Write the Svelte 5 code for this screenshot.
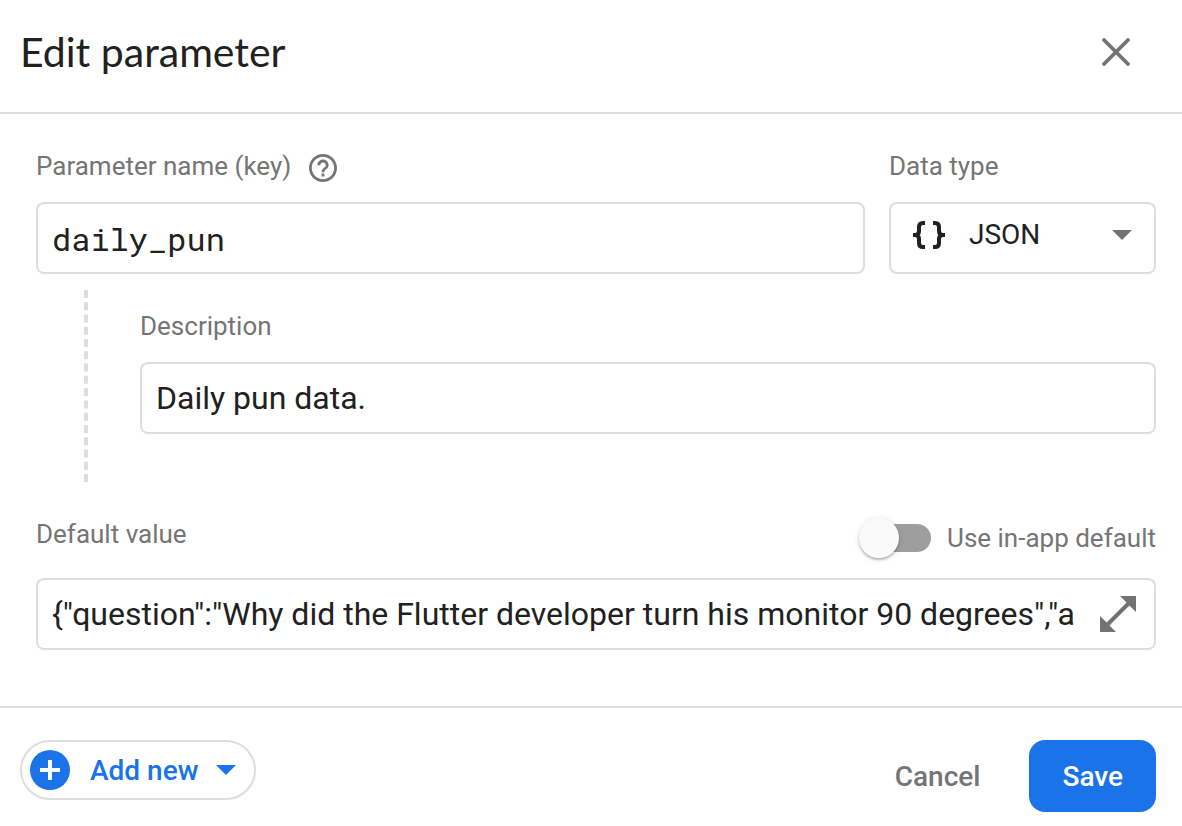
<script>
  let name = $state('daily_pun');
  let type = $state('JSON');
  let description = $state('Daily pun data.');
  let value = $state('{"question":"Why did the Flutter developer turn his monitor 90 degrees","a');
  let useDefault = $state(false);
</script>

<form class="dialog" onsubmit={(e) => e.preventDefault()}>
  <header>
    <h1>Edit parameter</h1>
    <button type="button" class="icon-button" aria-label="Close">
      <svg width="32" height="32" viewBox="0 0 32 32"><path d="M4 4 28 28M28 4 4 28" fill="none" stroke="#727272" stroke-width="3.8" stroke-linecap="round" /></svg>
    </button>
  </header>

  <main>
    <div class="top">
      <div class="field">
        <div class="label-row">
          <label for="name">Parameter name (key)</label>
          <button type="button" class="help" aria-label="Help">
            <svg width="28" height="28" viewBox="2 2 20 20"><path fill="#757575" d="M11 18h2v-2h-2v2zm1-16C6.480 2 2 6.480 2 12s4.480 10 10 10 10-4.480 10-10S17.520 2 12 2zm0 18c-4.410 0-8-3.590-8-8s3.590-8 8-8 8 3.590 8 8-3.590 8-8 8zm0-14c-2.210 0-4 1.790-4 4h2c0-1.100.9-2 2-2s2 .9 2 2c0 2-3 1.750-3 5h2c0-2.250 3-2.500 3-5 0-2.210-1.790-4-4-4z" /></svg>
          </button>
        </div>
        <div class="box"><input id="name" class="mono" bind:value={name} spellcheck="false" /></div>
      </div>
      <div class="field type">
        <div class="label-row"><label for="type">Data type</label></div>
        <div class="box select-box">
          <svg width="34" height="30" viewBox="0 0 34 30" fill="none" stroke="#212121" stroke-width="4">
            <path d="M14 3h-2Q8 3 8 7v4Q8 15 4 15H2M4 15Q8 15 8 19v4Q8 27 12 27h2M22 3h2Q28 3 28 7v4Q28 15 32 15h2M32 15Q28 15 28 19v4Q28 27 24 27h-2" />
          </svg>
          <select id="type" bind:value={type}>
            <option>JSON</option>
            <option>String</option>
            <option>Number</option>
            <option>Boolean</option>
          </select>
          <svg class="caret" width="20" height="10" viewBox="0 0 20 10"><path d="M0 0h20L10 10z" fill="#727272" /></svg>
        </div>
      </div>
    </div>

    <div class="nested">
      <div class="field">
        <div class="label-row"><label for="description">Description</label></div>
        <div class="box"><input id="description" bind:value={description} /></div>
      </div>
    </div>

    <div class="field">
      <div class="default-row">
        <div class="label-row"><label for="value">Default value</label></div>
        <label class="toggle">
          <input type="checkbox" role="switch" bind:checked={useDefault} />
          <span>Use in-app default</span>
        </label>
      </div>
      <div class="box value-box">
        <input id="value" bind:value spellcheck="false" />
        <button type="button" class="icon-button" aria-label="Open editor">
          <svg width="36" height="36" viewBox="0 0 36 36" fill="#727272"><path d="M36 16V0H20l6.580 6.580-20 20L0 20v16h16l-6.580-6.580 20-20z" /></svg>
        </button>
      </div>
    </div>
  </main>

  <footer>
    <button type="button" class="add">
      <svg width="40" height="40" viewBox="0 0 40 40"><circle cx="20" cy="20" r="20" fill="#1a73e8" /><path d="M20 10v20M10 20h20" stroke="#fff" stroke-width="4" /></svg>
      <span>Add new</span>
      <svg width="20" height="10" viewBox="0 0 20 10"><path d="M0 0h20L10 10z" fill="#1a73e8" /></svg>
    </button>
    <div class="actions">
      <button type="button" class="cancel">Cancel</button>
      <button type="submit" class="save">Save</button>
    </div>
  </footer>
</form>

<style>
  :global(body) {
    margin: 0;
    background: #fff;
  }
  .dialog {
    font-family: Roboto, "Liberation Sans", sans-serif;
    color: #212121;
  }
  .dialog * {
    box-sizing: border-box;
  }
  svg {
    display: block;
    flex: none;
  }
  button {
    font: inherit;
    border: 0;
    padding: 0;
    background: none;
    cursor: pointer;
  }
  header {
    display: flex;
    align-items: center;
    justify-content: space-between;
    padding: 24px 50px 32px 20px;
    border-bottom: 2px solid #dedede;
  }
  h1 {
    margin: 0;
    font: 400 41px/56px "Google Sans", "Product Sans", Lato, sans-serif;
  }
  main {
    padding: 32px 26px 56px 36px;
  }
  .top {
    display: flex;
    gap: 24px;
  }
  .field {
    display: flex;
    flex-direction: column;
    flex: 1;
    gap: 16px;
    min-width: 0;
  }
  .type {
    flex: 0 0 267px;
  }
  .label-row {
    display: flex;
    align-items: center;
    gap: 18px;
    height: 40px;
    color: #757575;
    font-size: 26px;
    line-height: 40px;
  }
  .help {
    padding-top: 4px;
  }
  .box {
    display: flex;
    align-items: center;
    height: 72px;
    padding: 0 14px;
    border: 2px solid #dedede;
    border-radius: 8px;
  }
  .box input {
    flex: 1;
    min-width: 0;
    height: 100%;
    padding: 0;
    border: 0;
    outline: 0;
    background: none;
    color: inherit;
    font: 32px Roboto, "Liberation Sans", sans-serif;
  }
  .box input.mono {
    font-family: "Roboto Mono", "Liberation Mono", monospace;
  }
  .select-box {
    gap: 24px;
    padding: 0 22px 6px 20px;
  }
  select {
    appearance: none;
    flex: 1;
    min-width: 0;
    padding: 0;
    border: 0;
    outline: 0;
    background: none;
    color: inherit;
    font: 28px/40px Roboto, "Liberation Sans", sans-serif;
  }
  .caret {
    pointer-events: none;
  }
  .nested {
    margin: 16px 0 32px 48px;
    padding: 16px 0 48px 52px;
    border-left: 4px dashed #dedede;
  }
  .default-row {
    display: flex;
    justify-content: space-between;
    height: 48px;
  }
  .toggle {
    display: flex;
    align-items: center;
    gap: 16px;
    color: #757575;
    font-size: 26px;
    line-height: 40px;
  }
  .toggle input {
    appearance: none;
    display: flex;
    align-items: center;
    width: 72px;
    height: 28px;
    margin: 0;
    border-radius: 14px;
    background: linear-gradient(#9e9e9e, #9e9e9e) right / 60px 100% no-repeat;
    cursor: pointer;
  }
  .toggle input::before {
    content: "";
    width: 40px;
    height: 40px;
    flex: none;
    border-radius: 50%;
    background: #fafafa;
    box-shadow: 0 2px 2px rgba(0, 0, 0, 0.22), 0 1px 6px rgba(0, 0, 0, 0.12);
  }
  .toggle input:checked {
    justify-content: flex-end;
  }
  .value-box {
    gap: 26px;
    padding-right: 18px;
  }
  footer {
    display: flex;
    align-items: flex-start;
    justify-content: space-between;
    padding: 32px 26px 14px 20px;
    border-top: 2px solid #dedede;
    font-size: 28px;
    font-weight: 500;
  }
  .add {
    display: flex;
    align-items: center;
    height: 60px;
    padding: 0 18px 0 8px;
    border: 2px solid #dedede;
    border-radius: 30px;
    color: #1a73e8;
  }
  .add span {
    margin: 0 18px 0 20px;
  }
  .actions {
    display: flex;
    gap: 16px;
  }
  .cancel,
  .save {
    height: 72px;
    padding: 0 33px;
    border-radius: 16px;
  }
  .cancel {
    color: #757575;
  }
  .save {
    background: #1a73e8;
    color: #fff;
  }
</style>
